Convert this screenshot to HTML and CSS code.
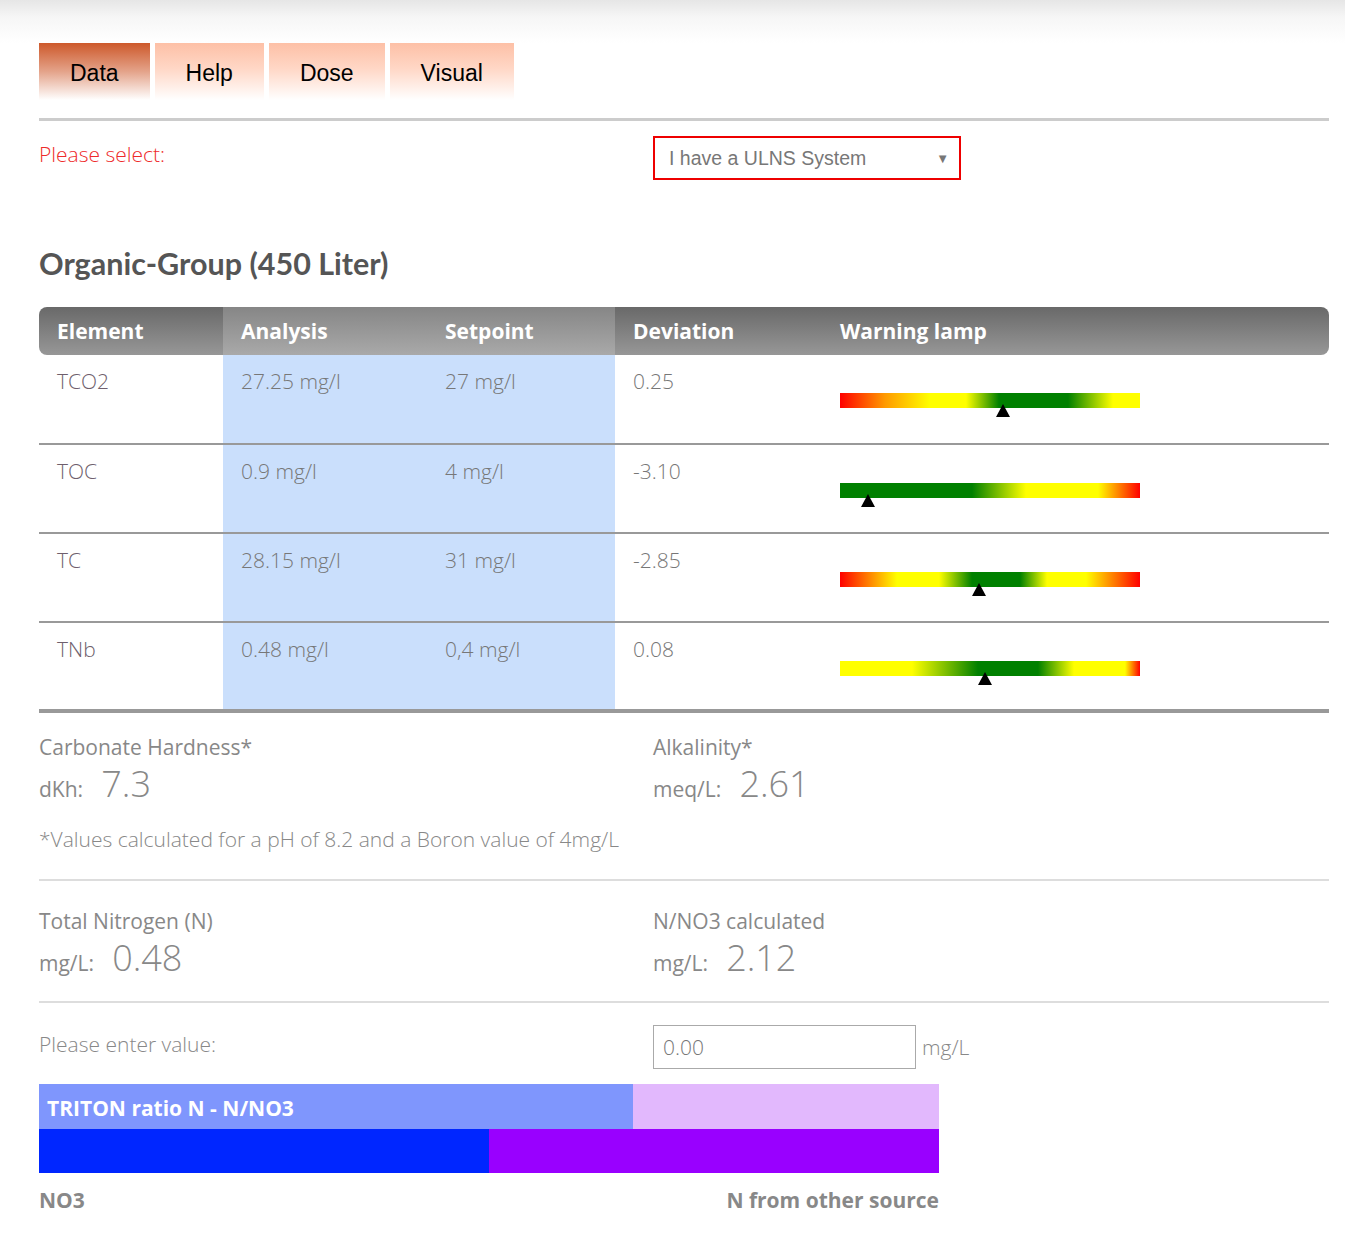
FILE: index.html
```html
<!DOCTYPE html>
<html lang="en">
<head>
    <meta charset="UTF-8">
    <meta name="viewport" content="width=device-width, initial-scale=1.0">
    <title>Organic-Group</title>
    <link rel="stylesheet" href="styles.css">
</head>
<body>
    <div class="topshade"></div>
    <div class="container">
        <div class="tabs">
            <a class="tab active" href="#">Data</a>
            <a class="tab" href="#">Help</a>
            <a class="tab" href="#">Dose</a>
            <a class="tab" href="#">Visual</a>
        </div>

        <div class="two-col select-row">
            <div class="select-label">Please select:</div>
            <div class="select-box">
                <span>I have a ULNS System</span>
                <span class="arrow">&#9660;</span>
            </div>
        </div>

        <h2>Organic-Group (450 Liter)</h2>

        <table class="results">
            <thead>
                <tr>
                    <th class="c-el">Element</th>
                    <th class="c-an hl">Analysis</th>
                    <th class="c-sp hl">Setpoint</th>
                    <th class="c-dev">Deviation</th>
                    <th class="c-lamp">Warning lamp</th>
                </tr>
            </thead>
            <tbody>
                <tr>
                    <td class="el">TCO2</td>
                    <td class="hl">27.25 mg/l</td>
                    <td class="hl">27 mg/l</td>
                    <td>0.25</td>
                    <td><div class="lamp lamp-a"><span class="marker" style="left: 54.3%"></span></div></td>
                </tr>
                <tr>
                    <td class="el">TOC</td>
                    <td class="hl">0.9 mg/l</td>
                    <td class="hl">4 mg/l</td>
                    <td>-3.10</td>
                    <td><div class="lamp lamp-b"><span class="marker" style="left: 9.3%"></span></div></td>
                </tr>
                <tr>
                    <td class="el">TC</td>
                    <td class="hl">28.15 mg/l</td>
                    <td class="hl">31 mg/l</td>
                    <td>-2.85</td>
                    <td><div class="lamp lamp-c"><span class="marker" style="left: 46.3%"></span></div></td>
                </tr>
                <tr>
                    <td class="el">TNb</td>
                    <td class="hl">0.48 mg/l</td>
                    <td class="hl">0,4 mg/l</td>
                    <td>0.08</td>
                    <td><div class="lamp lamp-d"><span class="marker" style="left: 48.3%"></span></div></td>
                </tr>
            </tbody>
        </table>

        <div class="two-col calc">
            <div>
                <div class="calc-title">Carbonate Hardness*</div>
                <div class="calc-value"><span class="unit">dKh:</span> <span class="num">7.3</span></div>
            </div>
            <div>
                <div class="calc-title">Alkalinity*</div>
                <div class="calc-value"><span class="unit">meq/L:</span> <span class="num">2.61</span></div>
            </div>
        </div>
        <p class="note">*Values calculated for a pH of 8.2 and a Boron value of 4mg/L</p>

        <hr>

        <div class="two-col calc calc-n">
            <div>
                <div class="calc-title">Total Nitrogen (N)</div>
                <div class="calc-value"><span class="unit">mg/L:</span> <span class="num">0.48</span></div>
            </div>
            <div>
                <div class="calc-title">N/NO3 calculated</div>
                <div class="calc-value"><span class="unit">mg/L:</span> <span class="num">2.12</span></div>
            </div>
        </div>

        <hr>

        <div class="two-col enter-row">
            <label for="other_n">Please enter value:</label>
            <div class="enter">
                <input type="text" id="other_n" value="0.00">
                <span class="enter-unit">mg/L</span>
            </div>
        </div>

        <div class="ratio">
            <div class="ratio-head">
                <div class="ratio-title" style="width: 66%">TRITON ratio N - N/NO3</div>
                <div class="ratio-rest"></div>
            </div>
            <div class="ratio-bar">
                <div class="ratio-no3" style="width: 50%"></div>
                <div class="ratio-other"></div>
            </div>
            <div class="ratio-legend">
                <span>NO3</span>
                <span>N from other source</span>
            </div>
        </div>
    </div>
</body>
</html>
```

FILE: styles.css
```css
body {
    font-family: "Open Sans", "Liberation Sans", Arial, sans-serif;
    margin: 0;
    padding: 0;
    background-color: #fff;
    color: #888;
}
.topshade {
    height: 43px;
    background: linear-gradient(to bottom, #e6e6e6 0%, #f6f6f6 40%, #fff 100%);
}
.container {
    width: 1290px;
    margin-left: 39px;
}
.tabs {
    display: flex;
    gap: 5px;
    padding-bottom: 18px;
    border-bottom: 3px solid #ccc;
}
.tab {
    display: block;
    height: 57px;
    line-height: 60px;
    padding: 0 31px;
    font-family: "Liberation Sans", Arial, sans-serif;
    font-size: 23px;
    color: #000;
    text-decoration: none;
    background: linear-gradient(to bottom, #fdc0a6 0%, #ffd7c6 45%, #fff 100%);
}
.tab.active {
    background: linear-gradient(to bottom, #cd592b 0%, #e4a38a 50%, #fff 100%);
}
.two-col {
    display: grid;
    grid-template-columns: 614px 1fr;
}
.select-row {
    padding-top: 15px;
}
.select-label {
    color: #ee2a2a;
    font-size: 21px;
    font-weight: 300;
    padding-top: 4px;
}
.select-box {
    width: 280px;
    height: 40px;
    border: 2px solid #ee0000;
    display: flex;
    align-items: center;
    justify-content: space-between;
    padding: 0 10px 0 14px;
    box-sizing: content-box;
    font-family: "Liberation Sans", Arial, sans-serif;
    font-size: 19.5px;
    color: #777;
}
.select-box .arrow {
    font-size: 13px;
    color: #777;
}
h2 {
    font-family: Lato, "Open Sans", sans-serif;
    font-weight: 700;
    font-size: 30.5px;
    color: #555;
    margin: 65px 0 26px;
    line-height: 36px;
}
.results {
    width: 100%;
    border-collapse: collapse;
    table-layout: fixed;
}
.results th {
    height: 48px;
    padding: 0 18px;
    text-align: left;
    font-size: 21px;
    font-weight: 700;
    color: #fff;
    background: linear-gradient(to bottom, #696969 0%, #979797 100%);
}
.results th.hl {
    background: linear-gradient(to bottom, #868686 0%, #a9a9a9 100%);
}
.results th.c-el {
    width: 148px;
    border-radius: 8px 0 0 8px;
}
.results th.c-an { width: 168px; }
.results th.c-sp { width: 152px; }
.results th.c-dev { width: 171px; }
.results th.c-lamp {
    border-radius: 0 8px 8px 0;
}
.results td {
    height: 89px;
    padding: 12px 18px 0;
    vertical-align: top;
    box-sizing: border-box;
    font-size: 21px;
    font-weight: 300;
    color: #777;
    border-bottom: 2px solid #999;
}
.results td.el {
    color: #6f5f6d;
}
.results td.hl {
    background-color: #cadffc;
}
.results tbody tr:last-child td {
    border-bottom: 4px solid #999;
}
.lamp {
    position: relative;
    width: 300px;
    height: 15px;
    margin-top: 26px;
}
.lamp-a {
    background: linear-gradient(to right, #f00 0%, #ff9a00 15%, #ff0 30%, #ff0 42%, #008000 53%, #008000 76%, #ff0 91%, #ff0 100%);
}
.lamp-b {
    background: linear-gradient(to right, #008000 0%, #008000 44%, #ff0 62%, #ff0 86%, #f00 100%);
}
.lamp-c {
    background: linear-gradient(to right, #f00 0%, #ff0 19%, #ff0 33%, #008000 44%, #008000 60%, #ff0 69%, #ff0 82%, #f00 100%);
}
.lamp-d {
    background: linear-gradient(to right, #ff0 0%, #ff0 24%, #008000 46%, #008000 66%, #ff0 78%, #ff0 95%, #f00 100%);
}
.marker {
    position: absolute;
    top: 11px;
    width: 0;
    height: 0;
    margin-left: -7px;
    border-left: 7px solid transparent;
    border-right: 7px solid transparent;
    border-bottom: 13px solid #000;
}
.calc {
    padding-top: 20px;
}
.calc-n {
    padding-top: 26px;
}
.calc-title {
    font-size: 21px;
    line-height: 28px;
}
.calc-value {
    line-height: 46px;
}
.calc-value .unit {
    font-size: 21px;
    margin-right: 14px;
}
.calc-value .num {
    font-size: 36px;
    font-weight: 300;
}
.note {
    margin: 11px 0 0;
    font-size: 21px;
    font-weight: 300;
    line-height: 28px;
    padding-bottom: 26px;
}
hr {
    border: none;
    border-top: 2px solid #ddd;
    margin: 0;
}
.calc + hr {
    margin-top: 13px;
}
.enter-row {
    padding-top: 22px;
    align-items: start;
}
.enter-row label {
    font-size: 21px;
    font-weight: 300;
    padding-top: 5px;
}
.enter {
    display: flex;
    align-items: center;
    gap: 6px;
}
.enter input {
    width: 263px;
    height: 44px;
    box-sizing: border-box;
    border: 1px solid #aaa;
    padding: 0 9px;
    font-family: "Open Sans", sans-serif;
    font-size: 21px;
    font-weight: 300;
    color: #777;
}
.enter-unit {
    font-size: 21px;
    font-weight: 300;
}
.ratio {
    width: 900px;
    margin-top: 15px;
}
.ratio-head, .ratio-bar {
    display: flex;
    height: 45px;
}
.ratio-title {
    background-color: #7f96fd;
    color: #fff;
    font-size: 21px;
    font-weight: 700;
    line-height: 48px;
    padding-left: 8px;
    box-sizing: border-box;
}
.ratio-rest {
    flex: 1;
    background-color: #e2b8fd;
}
.ratio-bar {
    height: 44px;
}
.ratio-no3 {
    background-color: #0026ff;
}
.ratio-other {
    flex: 1;
    background-color: #9900ff;
}
.ratio-legend {
    display: flex;
    justify-content: space-between;
    padding-top: 13px;
    font-size: 21px;
    font-weight: 700;
    color: #888;
}
```
